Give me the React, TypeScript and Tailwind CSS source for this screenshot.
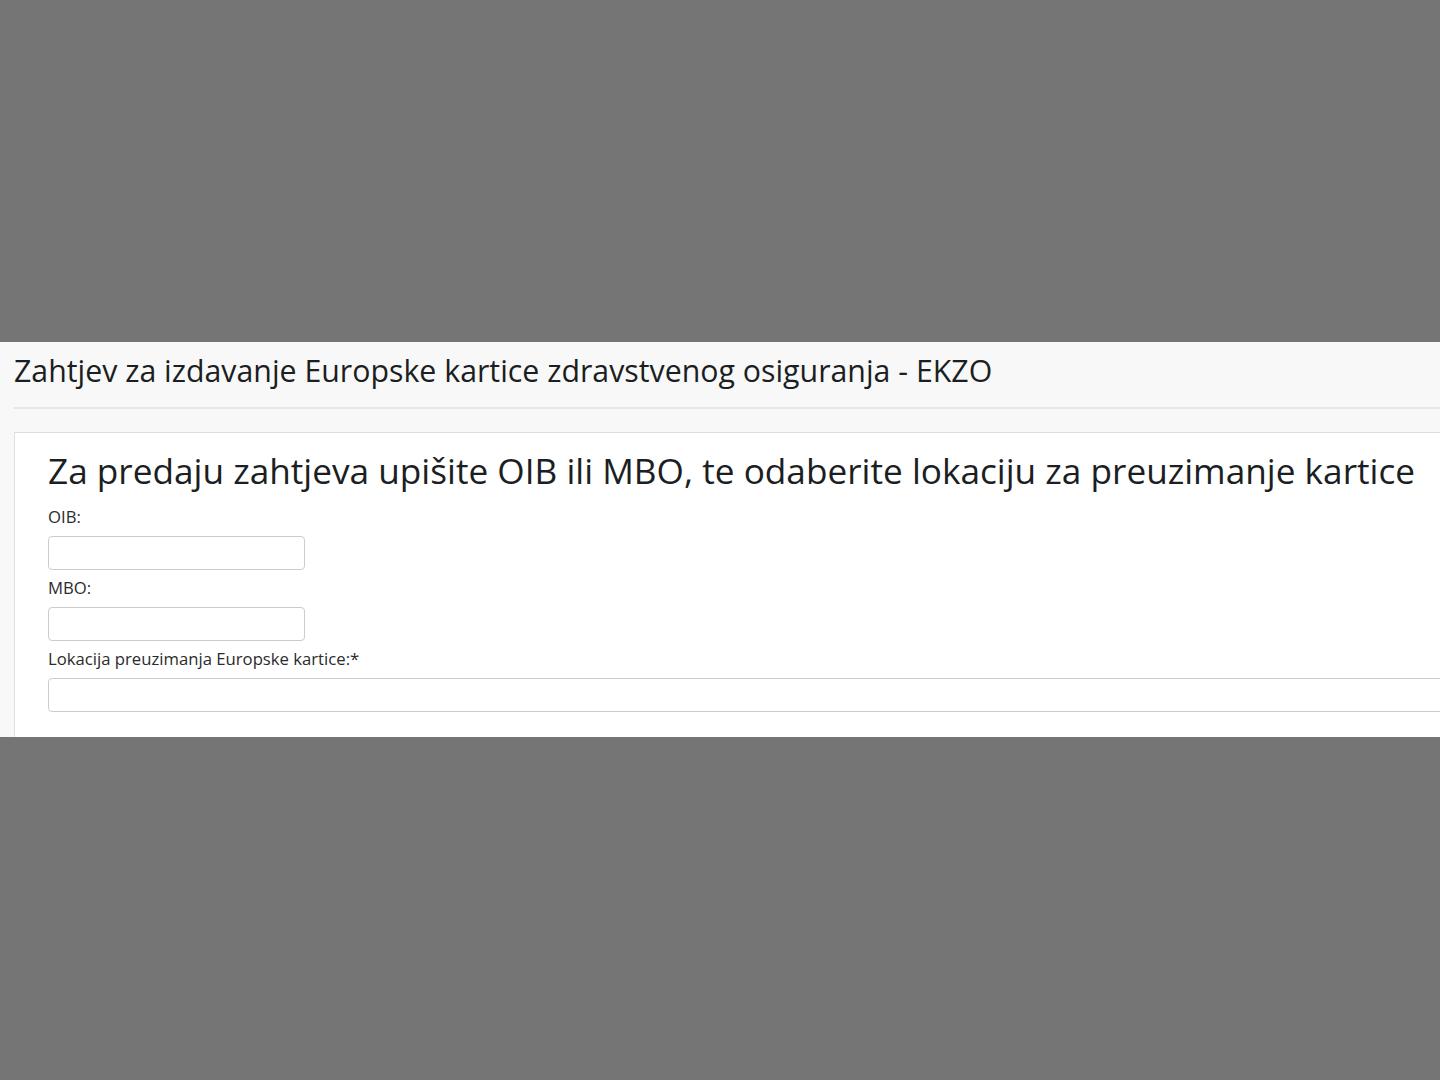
export default function App() {
  return (
    <div className="min-h-[1080px] w-[1440px] overflow-hidden bg-[#757575] font-['Open_Sans',sans-serif] text-[#1b1e22]">
      <div className="h-[342px]" />
      <div className="h-[395px] overflow-hidden bg-[#f8f8f8] pl-[14px]">
        {/* Page title */}
        <div className="border-b-2 border-[#e6e6e6] pt-[10px] pb-[17px]">
          <h2 className="whitespace-nowrap text-[30.3px] font-medium leading-[38px] text-[#1b1e22]">
            Zahtjev za izdavanje Europske kartice zdravstvenog osiguranja - EKZO
          </h2>
        </div>

        {/* Form card */}
        <div className="mt-[23px] w-[1460px] border border-[#dedede] bg-white pl-[33px] pt-[15px] pb-[40px]">
          <h1 className="whitespace-nowrap text-[35.2px] font-medium leading-[44px] text-[#1b1e22]">
            Za predaju zahtjeva upišite OIB ili MBO, te odaberite lokaciju za preuzimanje kartice
          </h1>
          <div className="mt-[14px] flex flex-col">
            <label className="text-[16.7px] leading-[22px] text-[#2b2b2b]">OIB:</label>
            <input className="mt-[8px] h-[34px] w-[257px] rounded-[4px] border border-[#cccccc] bg-white" />
            <label className="mt-[7px] text-[16.7px] leading-[22px] text-[#2b2b2b]">MBO:</label>
            <input className="mt-[8px] h-[34px] w-[257px] rounded-[4px] border border-[#cccccc] bg-white" />
            <label className="mt-[7px] text-[16.7px] leading-[22px] text-[#2b2b2b]">
              Lokacija preuzimanja Europske kartice:*
            </label>
            <input className="mt-[8px] h-[34px] w-[1420px] rounded-[4px] border border-[#cccccc] bg-white" />
          </div>
        </div>
      </div>
    </div>
  )
}
